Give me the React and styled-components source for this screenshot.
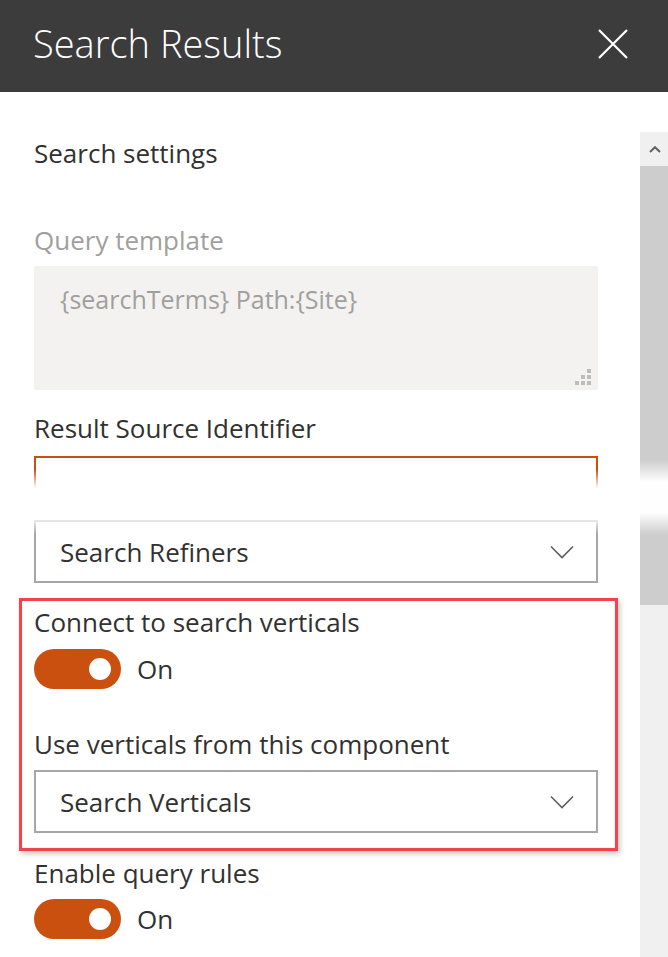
import React from 'react';
import styled, { createGlobalStyle } from 'styled-components';

const GlobalStyle = createGlobalStyle`
  html, body {
    margin: 0;
    padding: 0;
    background: #ffffff;
  }
  body {
    font-family: "Open Sans", "Noto Sans", sans-serif;
    color: #323130;
    overflow: hidden;
  }
`;

const Panel = styled.div`
  width: 668px;
  height: 957px;
  overflow: hidden;
  background: #ffffff;
`;

const Header = styled.header`
  height: 92px;
  background: #3c3c3c;
  display: flex;
  align-items: center;
  justify-content: space-between;
  padding: 0 40px 0 33px;
  box-sizing: border-box;
`;

const Title = styled.h1`
  margin: 0 0 6px;
  font-size: 38px;
  line-height: 48px;
  font-weight: 300;
  color: #ffffff;
  letter-spacing: 0;
`;

const CloseButton = styled.button`
  width: 30px;
  height: 30px;
  padding: 0;
  border: 0;
  background: transparent;
  display: flex;
  margin-bottom: 4px;
`;

const Body = styled.div`
  display: flex;
  align-items: flex-start;
`;

const Content = styled.div`
  width: 564px;
  padding: 45px 0 0 34px;
  display: flex;
  flex-direction: column;
`;

const Text = styled.div`
  font-size: 26px;
  line-height: 32px;
  color: ${(p) => (p.$muted ? '#a19f9d' : '#323130')};
  margin-top: ${(p) => p.$top || 0}px;
  white-space: nowrap;
`;

const TextArea = styled.div`
  margin-top: 10px;
  height: 124px;
  background: #f3f2f1;
  padding: 17px 26px;
  box-sizing: border-box;
  display: flex;
  flex-direction: column;
  justify-content: space-between;
  font-size: 25px;
  line-height: 32px;
  color: #a19f9d;
`;

const Grip = styled.svg`
  align-self: flex-end;
  margin-right: -19px;
  margin-bottom: -12px;
`;

const Input = styled.div`
  margin-top: 12px;
  height: 34px;
  border: 2px solid #ca5010;
  border-bottom: 0;
  box-sizing: border-box;
  -webkit-mask-image: linear-gradient(to bottom, #000 40%, transparent 95%);
  mask-image: linear-gradient(to bottom, #000 40%, transparent 95%);
`;

const Dropdown = styled.div`
  margin-top: ${(p) => p.$top || 10}px;
  height: 63px;
  border: 2px solid #a6a6a6;
  ${(p) =>
    p.$faded &&
    `border-image: linear-gradient(to bottom, #e6e6e6 0, #e6e6e6 2px, #a6a6a6 14px) 2;`}
  box-sizing: border-box;
  display: flex;
  align-items: center;
  justify-content: space-between;
  padding: 0 22px 0 24px;
  font-size: 26px;
  color: #323130;
`;

const Highlight = styled.div`
  margin: 15px -20px 0 -15px;
  padding: 5px 17px 15px 12px;
  border: 3px solid #f2434b;
  box-shadow: 2px 3px 5px rgba(0, 0, 0, 0.22), inset 0 0 2px rgba(0, 0, 0, 0.15);
  display: flex;
  flex-direction: column;
`;

const ToggleRow = styled.div`
  margin-top: ${(p) => p.$top || 11}px;
  display: flex;
  align-items: center;
  gap: 16px;
`;

const Track = styled.div`
  width: 87px;
  height: 40px;
  border-radius: 20px;
  background: #ca5010;
  display: flex;
  align-items: center;
  justify-content: flex-end;
  padding-right: 10px;
  box-sizing: border-box;
`;

const Knob = styled.span`
  width: 22px;
  height: 22px;
  border-radius: 50%;
  background: #ffffff;
`;

const ToggleText = styled.span`
  font-size: 26px;
  line-height: 32px;
  color: #323130;
`;

const Scrollbar = styled.div`
  margin: 40px 0 0 42px;
  width: 28px;
  height: 825px;
  background: #f0f0f0;
  display: flex;
  flex-direction: column;
`;

const ArrowButton = styled.div`
  height: 34px;
  display: flex;
  align-items: center;
  justify-content: center;
  padding-left: 2px;
`;

const Thumb = styled.div`
  height: 439px;
  background: linear-gradient(
    to bottom,
    #cdcdcd 0,
    #cdcdcd 67%,
    #ffffff 72%,
    #fdfdfd 79%,
    #cdcdcd 84%,
    #cdcdcd 100%
  );
`;

const Chevron = () => (
  <svg width="24" height="14" viewBox="0 0 24 14" fill="none">
    <path d="M1 1.5 L12 12.5 L23 1.5" stroke="#605e5c" strokeWidth="1.6" />
  </svg>
);

const Toggle = ({ top }) => (
  <ToggleRow $top={top}>
    <Track>
      <Knob />
    </Track>
    <ToggleText>On</ToggleText>
  </ToggleRow>
);

const App = () => (
  <Panel>
    <GlobalStyle />
    <Header>
      <Title>Search Results</Title>
      <CloseButton aria-label="Close">
        <svg width="30" height="30" viewBox="0 0 30 30">
          <path d="M1 1 L29 29 M29 1 L1 29" stroke="#ffffff" strokeWidth="2.2" />
        </svg>
      </CloseButton>
    </Header>
    <Body>
      <Content>
        <Text>Search settings</Text>
        <Text $muted $top={55}>
          Query template
        </Text>
        <TextArea>
          <span>{'{searchTerms} Path:{Site}'}</span>
          <Grip width="16" height="16" viewBox="0 0 16 16">
            <g fill="#bdbdbd">
              <rect x="12" y="0" width="4" height="4" />
              <rect x="6" y="6" width="4" height="4" />
              <rect x="12" y="6" width="4" height="4" />
              <rect x="0" y="12" width="4" height="4" />
              <rect x="6" y="12" width="4" height="4" />
              <rect x="12" y="12" width="4" height="4" />
            </g>
          </Grip>
        </TextArea>
        <Text $top={22}>Result Source Identifier</Text>
        <Input />
        <Dropdown $faded $top={30}>
          <span>Search Refiners</span>
          <Chevron />
        </Dropdown>
        <Highlight>
          <Text>Connect to search verticals</Text>
          <Toggle />
          <Text $top={39}>Use verticals from this component</Text>
          <Dropdown>
            <span>Search Verticals</span>
            <Chevron />
          </Dropdown>
        </Highlight>
        <Text $top={6}>Enable query rules</Text>
        <Toggle top={10} />
      </Content>
      <Scrollbar>
        <ArrowButton>
          <svg width="12" height="7" viewBox="0 0 12 7" fill="none">
            <path d="M1 6 L6 1.2 L11 6" stroke="#606060" strokeWidth="2" />
          </svg>
        </ArrowButton>
        <Thumb />
      </Scrollbar>
    </Body>
  </Panel>
);

export default App;
